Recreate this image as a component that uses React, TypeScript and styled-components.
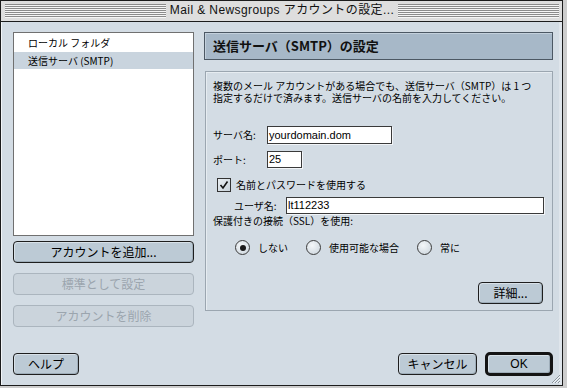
import React from "react";
import styled, { createGlobalStyle } from "styled-components";

const Global = createGlobalStyle`
  html, body { margin: 0; padding: 0; background: #cdcdcd; }
  body {
    width: 567px; height: 388px; overflow: hidden;
    font-family: "Noto Sans CJK JP", "Liberation Sans", sans-serif;
    color: #000;
  }
  * { box-sizing: border-box; }
`;

const Window = styled.div`
  position: relative;
  width: 563px;
  height: 386px;
  border: 1px solid #1c1c1c;
  display: flex;
  flex-direction: column;
  background: #d3dce4;
`;

const TitleBar = styled.div`
  flex: none;
  height: 21px;
  background: #dedede;
  border-bottom: 1px solid #1c1c1c;
  display: flex;
  align-items: flex-start;
  padding: 3px 3px 0 4px;
`;

const Stripes = styled.div`
  flex: 1;
  height: 14px;
  background: repeating-linear-gradient(
    to bottom,
    #8c8c8c 0px,
    #8c8c8c 1px,
    #f6f6f6 1px,
    #f6f6f6 2px
  );
`;

const TitleText = styled.div`
  flex: none;
  padding: 0 4px;
  margin-top: -2px;
  font-family: "Liberation Sans", "Noto Sans CJK JP", sans-serif;
  font-size: 12px;
  line-height: 17px;
  letter-spacing: 0.4px;
  color: #111;
`;

const Body = styled.div`
  flex: 1;
  display: flex;
  flex-direction: column;
  padding: 10px 9px 9px 12px;
  box-shadow: inset 1px 0 0 #f2f5f8, inset -3px 0 0 #dfe5eb;
`;

const Main = styled.div`
  display: flex;
  gap: 10px;
`;

const LeftCol = styled.div`
  width: 181px;
  flex: none;
  display: flex;
  flex-direction: column;
`;

const List = styled.div`
  height: 204px;
  background: #fff;
  border: 1px solid #707070;
  padding-top: 1px;
`;

const ListRow = styled.div<{ $selected?: boolean }>`
  height: ${(p) => (p.$selected ? 17 : 18)}px;
  padding-left: 14px;
  font-size: 10px;
  line-height: ${(p) => (p.$selected ? 17 : 18)}px;
  background: ${(p) => (p.$selected ? "#c9d4de" : "transparent")};
`;

const Button = styled.div<{ $mt?: number; $w?: number; $disabled?: boolean }>`
  margin-top: ${(p) => p.$mt ?? 0}px;
  width: ${(p) => (p.$w ? `${p.$w}px` : "auto")};
  height: 22px;
  border-radius: 4px;
  border: 1px solid ${(p) => (p.$disabled ? "#abb5be" : "#1e1e1e")};
  background: ${(p) => (p.$disabled ? "#cbd4dc" : "#bccad5")};
  box-shadow: ${(p) =>
    p.$disabled ? "none" : "inset 1px 1px 0 #d8e1e8, inset -1px -1px 0 #9eadb9"};
  color: ${(p) => (p.$disabled ? "#9ba5ae" : "#000")};
  font-size: 12px;
  line-height: 20px;
  text-align: center;
`;

const DefaultButton = styled.div`
  width: 68px;
  height: 24px;
  border-radius: 5px;
  border: 3px solid #141414;
  background: #bccad5;
  box-shadow: inset 1px 1px 0 #d8e1e8, inset -1px -1px 0 #9eadb9;
  font-family: "Liberation Sans", sans-serif;
  font-size: 12px;
  line-height: 18px;
  text-align: center;
`;

const RightCol = styled.div`
  flex: 1;
  display: flex;
  flex-direction: column;
`;

const Header = styled.div`
  height: 28px;
  background: #a7b8c8;
  border: 1px solid #4c5864;
  box-shadow: inset 1px 1px 0 #c3d0dc;
  padding-left: 8px;
  font-size: 13px;
  font-weight: 700;
  line-height: 25px;
  color: #111;
`;

const Group = styled.div`
  margin-top: 11px;
  margin-left: 1px;
  height: 240px;
  border: 1px solid #9ba6b0;
  box-shadow: inset 1px 1px 0 #e6ecf1;
  padding: 8px 8px 0 7px;
  display: flex;
  flex-direction: column;
`;

const DescLine = styled.div`
  height: 12px;
  display: flex;
  align-items: center;
  font-size: 10px;
  line-height: 10px;
  white-space: nowrap;
`;

const Row = styled.div<{ $mt: number; $indent?: number; $h?: number }>`
  margin-top: ${(p) => p.$mt}px;
  padding-left: ${(p) => p.$indent ?? 0}px;
  height: ${(p) => p.$h ?? 18}px;
  display: flex;
  align-items: center;
`;

const Label = styled.div<{ $w?: number }>`
  width: ${(p) => (p.$w ? `${p.$w}px` : "auto")};
  flex: none;
  font-size: 10px;
  line-height: 12px;
  white-space: nowrap;
`;

const Input = styled.div<{ $w: number; $h: number }>`
  width: ${(p) => p.$w}px;
  height: ${(p) => p.$h}px;
  background: #fff;
  border: 1px solid #3a3a3a;
  box-shadow: 1px 1px 0 #f2f5f8;
  padding-left: 1px;
  font-family: "Liberation Sans", sans-serif;
  font-size: 11px;
  line-height: ${(p) => p.$h - 2}px;
`;

const CheckBox = styled.div`
  width: 14px;
  height: 14px;
  border: 1px solid #333;
  background: linear-gradient(135deg, #e9eef2, #c8d2da);
  display: flex;
  align-items: center;
  justify-content: center;
  margin-right: 5px;
`;

const RadioItem = styled.div`
  display: flex;
  align-items: center;
  margin-right: 18px;
`;

const Radio = styled.div<{ $on?: boolean }>`
  width: 15px;
  height: 15px;
  border-radius: 50%;
  border: 1px solid #3c3c3c;
  background: radial-gradient(circle at 40% 35%, #f4f7f9, #c9d3db);
  display: flex;
  align-items: center;
  justify-content: center;
  margin-right: 8px;
  &::after {
    content: "";
    display: ${(p) => (p.$on ? "block" : "none")};
    width: 6px;
    height: 6px;
    border-radius: 50%;
    background: #1a1a1a;
  }
`;

const DetailRow = styled.div`
  margin-top: 27px;
  display: flex;
  justify-content: flex-end;
  padding-right: 1px;
`;

const Spacer = styled.div`
  flex: 1;
`;

const Footer = styled.div`
  display: flex;
  align-items: center;
  gap: 8px;
`;

const Grow = styled.svg`
  position: absolute;
  right: 1px;
  bottom: 1px;
`;

export default function App() {
  return (
    <>
      <Global />
      <Window>
        <TitleBar>
          <Stripes />
          <TitleText>Mail &amp; Newsgroups アカウントの設定...</TitleText>
          <Stripes />
        </TitleBar>
        <Body>
          <Main>
            <LeftCol>
              <List>
                <ListRow>ローカル フォルダ</ListRow>
                <ListRow $selected>送信サーバ (SMTP)</ListRow>
              </List>
              <Button $mt={5}>アカウントを追加...</Button>
              <Button $mt={10} $disabled>標準として設定</Button>
              <Button $mt={10} $disabled>アカウントを削除</Button>
            </LeftCol>
            <RightCol>
              <Header>送信サーバ（SMTP）の設定</Header>
              <Group>
                <DescLine>複数のメール アカウントがある場合でも、送信サーバ（SMTP）は 1 つ</DescLine>
                <DescLine>指定するだけで済みます。送信サーバの名前を入力してください。</DescLine>
                <Row $mt={22}>
                  <Label $w={54}>サーバ名:</Label>
                  <Input $w={125} $h={18}>yourdomain.dom</Input>
                </Row>
                <Row $mt={7} $h={17}>
                  <Label $w={54}>ポート:</Label>
                  <Input $w={35} $h={17}>25</Input>
                </Row>
                <Row $mt={10} $indent={4} $h={14}>
                  <CheckBox>
                    <svg width="10" height="10" viewBox="0 0 10 10">
                      <path d="M1.5 5 L4 8 L8.5 1.5" fill="none" stroke="#111" strokeWidth="1.6" />
                    </svg>
                  </CheckBox>
                  <Label>名前とパスワードを使用する</Label>
                </Row>
                <Row $mt={5} $indent={21} $h={17}>
                  <Label $w={52}>ユーザ名:</Label>
                  <Input $w={258} $h={17}>lt112233</Input>
                </Row>
                <Row $mt={1} $h={12}>
                  <Label>保護付きの接続（SSL）を使用:</Label>
                </Row>
                <Row $mt={13} $indent={22} $h={15}>
                  <RadioItem>
                    <Radio $on />
                    <Label>しない</Label>
                  </RadioItem>
                  <RadioItem>
                    <Radio />
                    <Label>使用可能な場合</Label>
                  </RadioItem>
                  <RadioItem>
                    <Radio />
                    <Label>常に</Label>
                  </RadioItem>
                </Row>
                <DetailRow>
                  <Button $w={65}>詳細...</Button>
                </DetailRow>
              </Group>
            </RightCol>
          </Main>
          <Spacer />
          <Footer>
            <Button $w={66}>ヘルプ</Button>
            <Spacer />
            <Button $w={79}>キャンセル</Button>
            <DefaultButton>OK</DefaultButton>
          </Footer>
        </Body>
        <Grow width="12" height="12" viewBox="0 0 12 12">
          <path d="M11 3 L3 11 M11 6 L6 11 M11 9 L9 11" stroke="#8a939b" strokeWidth="1" />
          <path d="M11 4 L4 11 M11 7 L7 11 M11 10 L10 11" stroke="#f2f5f8" strokeWidth="1" />
        </Grow>
      </Window>
    </>
  );
}
